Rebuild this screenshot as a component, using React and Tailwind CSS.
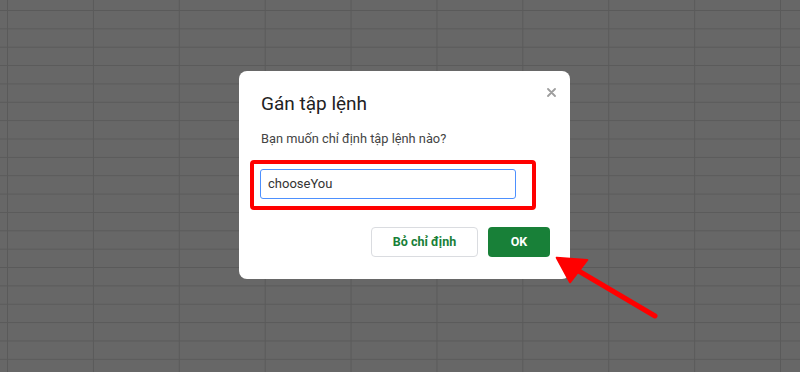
export default function App() {
  return (
    <div className="relative w-[800px] h-[372px] overflow-hidden bg-[#676767] bg-[linear-gradient(to_right,#5a5a5a_1px,transparent_1px),linear-gradient(to_bottom,#5a5a5a_1px,transparent_1px)] bg-size-[85.9px_18.37px] bg-position-[7px_10px] font-['Roboto',sans-serif]">
      <div className="absolute left-[239px] top-[71px] w-[331px] h-[208px] bg-white rounded-[8px] flex flex-col pl-[22px] pr-[20px] pt-[21px]">
        <svg className="absolute left-[308px] top-[17px]" width="9" height="9" viewBox="0 0 9 9">
          <path d="M1 1L8 8M8 1L1 8" stroke="#9e9e9e" strokeWidth="1.8" strokeLinecap="round" />
        </svg>
        <div className="text-[19px] leading-[24px] text-[#222222]">Gán tập lệnh</div>
        <div className="mt-[15px] text-[12.8px] leading-[16px] text-[#444444]">Bạn muốn chỉ định tập lệnh nào?</div>
        <div className="relative mt-[22px] w-[256px] h-[30px] -ml-px">
          <div className="absolute -left-[10px] -top-[9px] w-[286px] h-[50px] border-[4px] border-[#ff0000] rounded-[4px]"></div>
          <div className="w-full h-full border border-[#4d90fe] rounded-[3px] flex items-center pl-[7px] text-[13px] text-[#333333]">chooseYou</div>
        </div>
        <div className="mt-[28px] flex justify-end gap-[10px]">
          <div className="w-[107px] h-[30px] border border-[#dadce0] rounded-[4px] flex items-center justify-center text-[12.5px] font-bold text-[#188038]">Bỏ chỉ định</div>
          <div className="w-[62px] h-[30px] bg-[#188038] rounded-[4px] flex items-center justify-center text-[12.5px] font-bold text-white">OK</div>
        </div>
      </div>
      <svg className="absolute left-0 top-0" width="800" height="372" viewBox="0 0 800 372">
        <line x1="655" y1="316" x2="577" y2="270" stroke="#ff0000" strokeWidth="5" strokeLinecap="round" />
        <polygon points="556.7,257.7 587.3,260 570,282.3" fill="#ff0000" stroke="#ff0000" strokeWidth="2" strokeLinejoin="round" />
      </svg>
    </div>
  );
}
